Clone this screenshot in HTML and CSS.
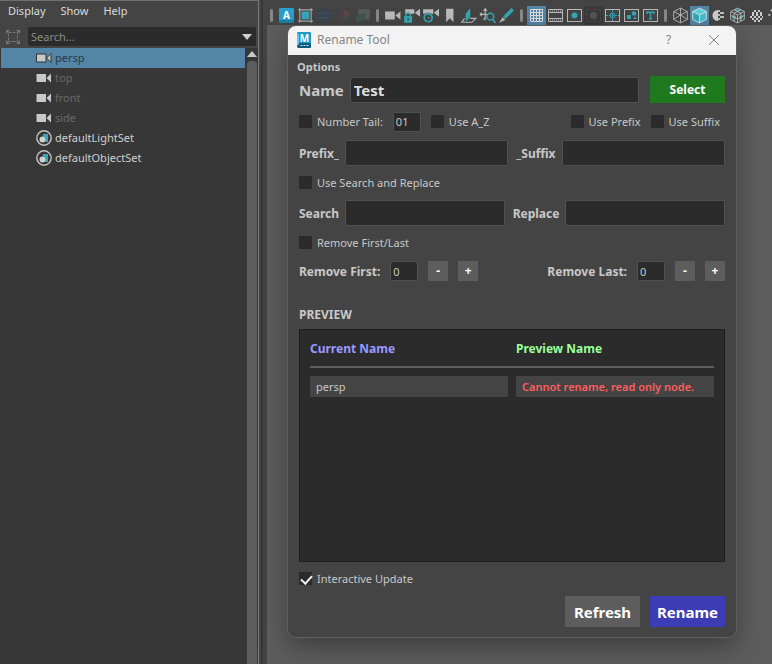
FILE: index.html
```
<!DOCTYPE html>
<html lang="en">
<head>
  <meta charset="UTF-8">
  <meta name="viewport" content="width=device-width, initial-scale=1.0">
  <title>Rename Tool</title>
  <link rel="stylesheet" href="styles.css">
</head>
<body>

<!-- shared icons -->
<svg class="defs" width="0" height="0">
  <symbol id="camera" viewBox="0 0 15 12">
    <path d="M0 2h9.500v8H0zM10 6l4.500-4.500v9z"/>
  </symbol>
  <symbol id="set" viewBox="0 0 16 16">
    <circle cx="8" cy="8" r="7.200" fill="none" stroke="#c4c4c4" stroke-width="1.400"/>
    <path fill="#35a7b5" d="M7 4h5v8H9V7H7z"/>
    <circle cx="6.500" cy="9.500" r="3" fill="#d0d0d0"/>
  </symbol>
</svg>

<aside class="outliner">
  <nav class="menu">
    <a href="#">Display</a>
    <a href="#">Show</a>
    <a href="#">Help</a>
  </nav>
  <div class="search-row">
    <svg class="frame-icon" viewBox="0 0 16 16">
      <path fill="none" stroke="#777" d="M3.500 3.500h9v9h-9z" stroke-dasharray="3 1"/>
      <path fill="#777" d="M1 1h4L1 5zM15 1v4l-4-4zM15 15h-4l4-4zM1 15v-4l4 4z"/>
    </svg>
    <div class="search-box">
      <input type="text" placeholder="Search..." aria-label="Search">
      <button type="button" class="search-arrow" aria-label="Search options"></button>
    </div>
  </div>
  <div class="list">
    <ul class="nodes">
      <li class="node selected"><svg class="node-icon cam"><use href="#camera"/></svg>persp</li>
      <li class="node dim"><svg class="node-icon cam"><use href="#camera"/></svg>top</li>
      <li class="node dim"><svg class="node-icon cam"><use href="#camera"/></svg>front</li>
      <li class="node dim"><svg class="node-icon cam"><use href="#camera"/></svg>side</li>
      <li class="node"><svg class="node-icon"><use href="#set"/></svg>defaultLightSet</li>
      <li class="node"><svg class="node-icon"><use href="#set"/></svg>defaultObjectSet</li>
    </ul>
    <div class="scrollbar">
      <span class="scroll-up"></span>
      <span class="scroll-thumb"></span>
    </div>
  </div>
</aside>

<main class="panel">
  <div class="toolbar">
    <span class="sep"></span>
    <button type="button" aria-label="Arnold"><svg viewBox="-1 -1 17 17"><rect width="15" height="15" rx="1" fill="#2a9fcb"/><path fill="#1c7fa8" d="M0 12h15v3H0z"/><text x="7.500" y="11" text-anchor="middle" class="badge-letter">A</text></svg></button>
    <button type="button" aria-label="Isolate"><svg viewBox="0 0 15 15"><path fill="#35a7b5" d="M4 4h7v7H4z"/><path fill="none" stroke="#aaa" d="M2.500 1v13M12.500 1v13M1 2.500h13M1 12.500h13"/></svg></button>
    <button type="button" aria-label="Layers"><svg viewBox="0 0 15 15"><path fill="#3b4552" d="M1 2h13v11H1z"/><path stroke="#485160" d="M1 5.500h13M1 9.500h13"/></svg></button>
    <button type="button" aria-label="Color"><svg viewBox="0 0 15 15"><circle cx="7.500" cy="7.500" r="5.500" fill="#4d3f4d"/><path fill="#5c4545" d="M7.500 2a5.500 5.500 0 0 1 5 7.500l-5-2z"/><path fill="#405044" d="M7.500 7.500l5 2a5.500 5.500 0 0 1-8 2z"/></svg></button>
    <button type="button" aria-label="Compare"><svg viewBox="0 0 15 15"><path fill="#5a5a5a" d="M4 2h10v9H4z"/><path fill="#3f554d" d="M1 13q0-7 9-8v6q-5 0-6 3z"/></svg></button>
    <span class="sep"></span>
    <button type="button" aria-label="Camera"><svg viewBox="0 0 15 15"><path fill="#bbb" d="M1 4h8.500v7H1zM10 7.500L14.500 4v7z"/></svg></button>
    <button type="button" aria-label="Lock camera"><svg viewBox="0 0 15 15"><path fill="#bbb" d="M2 2h8v4H2zM10.500 5L15 1.500v7z"/><path fill="#35a7b5" d="M1 8h7v6H1z"/><path fill="none" stroke="#35a7b5" stroke-width="1.300" d="M2.500 8V6.500q2-3 4 0V8"/><path fill="#333" d="M4 10h1v2H4z"/></svg></button>
    <button type="button" aria-label="Camera attributes"><svg viewBox="0 0 15 15"><path fill="#bbb" d="M1 2h9v4H1zM10.500 5L15 1.500v7z"/><circle cx="5.500" cy="9.500" r="4.500" fill="#444"/><circle cx="5.500" cy="9.500" r="3.500" fill="none" stroke="#35a7b5" stroke-width="1.500"/><path fill="#35a7b5" d="M5 9h2v1H5z"/></svg></button>
    <button type="button" aria-label="Bookmark"><svg viewBox="0 0 15 15"><path fill="#bbb" d="M4.500 1.500h6.500v12L7.750 10 4.500 13.500z"/></svg></button>
    <button type="button" aria-label="Image plane"><svg viewBox="0 0 15 15"><path fill="none" stroke="#bbb" d="M4 10L1.500 13.500h9L14 10H9"/><path fill="#35a7b5" d="M5 6l4-5v8l-4 4z"/></svg></button>
    <button type="button" aria-label="Pan zoom"><svg viewBox="0 0 15 15"><path fill="none" stroke="#bbb" d="M5.500 2v9M1 6.500h8M4 3.500l1.500-2 1.500 2M2.500 5L1 6.500 2.500 8M4 10l1.500 1.500"/><circle cx="10" cy="8.500" r="3" fill="#444" stroke="#35a7b5" stroke-width="1.400"/><path stroke="#35a7b5" stroke-width="1.500" d="M12 11l2.500 3"/></svg></button>
    <button type="button" aria-label="Grease pencil"><svg viewBox="0 0 15 15"><path stroke="#35a7b5" stroke-width="3" d="M5.500 9.500L13 2"/><path fill="#bbb" d="M4 9l2.500 2.500L1 14z"/></svg></button>
    <span class="sep"></span>
    <button type="button" class="active" aria-label="Grid"><svg viewBox="0 0 17 17"><path fill="none" stroke="#ddd" d="M2.500 2.500h12v12h-12zM5.500 2v13M8.500 2v13M11.500 2v13M2 5.500h13M2 8.500h13M2 11.500h13"/></svg></button>
    <button type="button" aria-label="Film gate"><svg viewBox="0 0 17 17"><path fill="none" stroke="#bbb" d="M1.500 2.500h14v12h-14zM2 5.500h13M2 11.500h13"/><path stroke="#bbb" stroke-dasharray="1 1" d="M3 4h12M3 13h12"/></svg></button>
    <button type="button" aria-label="Resolution gate"><svg viewBox="0 0 17 17"><rect x="1.500" y="2.500" width="14" height="12" fill="none" stroke="#bbb"/><circle cx="8.500" cy="8.500" r="3" fill="#35a7b5"/></svg></button>
    <button type="button" class="pressed" aria-label="Gate mask"><svg viewBox="0 0 17 17"><rect x="1.500" y="2.500" width="14" height="12" fill="none" stroke="#444"/><circle cx="8.500" cy="8.500" r="3.500" fill="#555"/></svg></button>
    <button type="button" aria-label="Field chart"><svg viewBox="0 0 17 17"><rect x="1.500" y="2.500" width="14" height="12" fill="none" stroke="#bbb"/><path fill="none" stroke="#35a7b5" stroke-dasharray="2 1" d="M8.500 3v11M2 8.500h13"/><circle cx="8.500" cy="8.500" r="2.500" fill="none" stroke="#35a7b5"/></svg></button>
    <button type="button" aria-label="Safe action"><svg viewBox="0 0 17 17"><rect x="1.500" y="2.500" width="14" height="12" fill="none" stroke="#bbb"/><circle cx="11" cy="6.500" r="2.300" fill="#35a7b5"/><path fill="#35a7b5" d="M4 8h4v4H4zM10 12l2-2.500 2 2.500z"/></svg></button>
    <button type="button" aria-label="Safe title"><svg viewBox="0 0 17 17"><rect x="1.500" y="2.500" width="14" height="12" fill="none" stroke="#bbb"/><path fill="none" stroke="#35a7b5" stroke-width="1.500" d="M5 7V5.300h7V7M8.500 5v7M7 12h3"/></svg></button>
    <span class="sep"></span>
    <button type="button" aria-label="Wireframe"><svg viewBox="0 0 15 15"><path fill="none" stroke="#bbb" stroke-width=".8" d="M7.500 1l6 3v7l-6 3-6-3V4zM1.500 4l6 3 6-3M7.500 7v7M7.500 1v6M1.500 11l6-4 6 4"/></svg></button>
    <button type="button" class="active" aria-label="Shaded"><svg viewBox="0 0 15 15"><path fill="#5cd0dd" d="M7.500 1l6 3-6 3-6-3z"/><path fill="#35a7b5" d="M1.500 4l6 3v7l-6-3z"/><path fill="#48bccb" d="M13.500 4l-6 3v7l6-3z"/><path fill="none" stroke="#eee" stroke-width=".7" d="M7.500 1l6 3v7l-6 3-6-3V4zM1.500 4l6 3 6-3M7.500 7v7"/></svg></button>
    <button type="button" aria-label="Default material"><svg viewBox="0 0 17 17"><path fill="#ccc" d="M8 3v11a5.500 5.500 0 0 1 0-11z"/><path fill="none" stroke="#bbb" stroke-width="2" stroke-dasharray="2 2" d="M9 3v12M13 5v7"/><path fill="none" stroke="#bbb" stroke-width="2" stroke-dasharray="2 2" d="M11 5v8"/></svg></button>
    <button type="button" aria-label="Textured"><svg viewBox="0 0 15 15"><path fill="#35a7b5" d="M5 2l5 0-2.500 3zM3 7l3 1v3l-3-1zM9 8l3-1v3l-3 2z"/><path fill="none" stroke="#bbb" stroke-width=".8" d="M7.500 1l6 3v7l-6 3-6-3V4zM1.500 4l6 3 6-3M7.500 7v7M4.500 2.500l6 3v7M10.500 2.500l-6 3v7M1.500 7.500l6 3 6-3"/></svg></button>
    <button type="button" aria-label="Checker"><svg viewBox="0 0 17 17"><path fill="none" stroke="#ccc" stroke-width="2" stroke-dasharray="2 2" d="M6 4h6M4 8h10M4 12h10"/><path fill="none" stroke="#ccc" stroke-width="2" stroke-dasharray="2 2" d="M4 6h10M2 10h13M6 14h6"/></svg></button>
    <button type="button" aria-label="Lights"><svg viewBox="0 0 15 15"><circle cx="4" cy="3" r="1" fill="#bbb"/><circle cx="2" cy="7" r="1" fill="#bbb"/></svg></button>
  </div>

  <div class="viewport">
    <section class="dialog">
      <header class="titlebar">
        <svg class="app-icon" viewBox="0 0 16 16"><path fill="#1d9cc7" d="M1 1q0-1 1-1h12q1 0 1 1v10H1z"/><path fill="#0f5a7d" d="M1 11h14v4q0 1-1 1H2l-1-1z"/><path fill="#67c7e4" d="M1 1l2 2v9l-2 2z"/><text x="8.500" y="10" text-anchor="middle" class="badge-letter">M</text><path stroke="#cde6ef" stroke-dasharray="2 1" d="M4.500 13.500h8"/></svg>
        <h1>Rename Tool</h1>
        <button type="button" class="title-button" aria-label="Help">?</button>
        <button type="button" class="title-button" aria-label="Close"><svg viewBox="0 0 12 12"><path stroke="#888" d="M1 1l10 10M11 1L1 11"/></svg></button>
      </header>

      <form class="content">
        <h2 class="options">Options</h2>
        <div class="row name-row">
          <label for="name">Name</label>
          <input type="text" id="name" class="field" value="Test">
          <button type="button" class="select-button">Select</button>
        </div>
        <div class="row checks">
          <label class="check"><input type="checkbox">Number Tail:</label>
          <input type="text" class="field small" value="01" aria-label="Number tail start">
          <label class="check"><input type="checkbox">Use A_Z</label>
          <label class="check push"><input type="checkbox">Use Prefix</label>
          <label class="check suffix"><input type="checkbox">Use Suffix</label>
        </div>
        <div class="row">
          <label for="prefix">Prefix_</label>
          <input type="text" id="prefix" class="field">
          <label for="suffix" class="second">_Suffix</label>
          <input type="text" id="suffix" class="field">
        </div>
        <label class="check"><input type="checkbox">Use Search and Replace</label>
        <div class="row">
          <label for="search">Search</label>
          <input type="text" id="search" class="field">
          <label for="replace" class="second">Replace</label>
          <input type="text" id="replace" class="field">
        </div>
        <label class="check"><input type="checkbox">Remove First/Last</label>
        <div class="row remove-row">
          <div class="stepper">
            <label for="first">Remove First:</label>
            <input type="text" id="first" class="field small" value="0">
            <button type="button">-</button>
            <button type="button">+</button>
          </div>
          <div class="stepper">
            <label for="last">Remove Last:</label>
            <input type="text" id="last" class="field small" value="0">
            <button type="button">-</button>
            <button type="button">+</button>
          </div>
        </div>

        <h2 class="preview-title">PREVIEW</h2>
        <div class="preview">
          <table>
            <thead>
              <tr><th class="current">Current Name</th><th class="new">Preview Name</th></tr>
            </thead>
            <tbody>
              <tr>
                <td><div class="cell">persp</div></td>
                <td><div class="cell error">Cannot rename, read only node.</div></td>
              </tr>
            </tbody>
          </table>
        </div>
        <label class="check"><input type="checkbox" checked>Interactive Update</label>
        <div class="actions">
          <button type="button" class="refresh">Refresh</button>
          <button type="submit" class="rename">Rename</button>
        </div>
      </form>
    </section>
  </div>
</main>

</body>
</html>
```
FILE: styles.css
```
* {
  box-sizing: border-box;
}

body {
  margin: 0;
  display: flex;
  min-height: 100vh;
  background-color: #444;
  color: #c8c8c8;
  font-family: "Noto Sans", "Open Sans", sans-serif;
  font-size: 11px;
  overflow: hidden;
}

button,
input {
  font-family: inherit;
  font-size: inherit;
  color: inherit;
  margin: 0;
  padding: 0;
  border: none;
}

h1,
h2 {
  margin: 0;
}

.defs {
  position: absolute;
}

/* outliner */
.outliner {
  flex: 0 0 259px;
  display: flex;
  flex-direction: column;
  border-top: 1px solid #6f6f6f;
  border-right: 1px solid #7a7a7a;
}

.menu {
  display: flex;
  gap: 15px;
  height: 25px;
  padding-left: 8px;
  line-height: 20px;
}

.menu a {
  color: #dcdcdc;
  text-decoration: none;
}

.search-row {
  display: flex;
  align-items: center;
  gap: 7px;
  padding: 1px 2px 2px 5px;
}

.frame-icon {
  width: 16px;
  height: 16px;
}

.search-box {
  flex: 1;
  display: flex;
  align-items: center;
  height: 19px;
  padding: 0 4px 0 3px;
  background-color: #2b2b2b;
  border-radius: 2px;
}

.search-box input {
  flex: 1;
  min-width: 0;
  background: none;
  outline: none;
}

.search-box input::placeholder {
  color: #8c8c8c;
}

.search-arrow {
  border: 5px solid transparent;
  border-top: 6px solid #d0d0d0;
  border-bottom: none;
  background: none;
}

.list {
  flex: 1;
  display: flex;
  gap: 1px;
  padding-left: 1px;
  background-color: #373737;
}

.nodes {
  flex: 1;
  margin: 0;
  padding: 0;
  list-style: none;
}

.node {
  display: flex;
  align-items: center;
  gap: 3px;
  height: 20px;
  padding: 0 0 1px 35px;
  color: #d0d0d0;
}

.node.selected {
  background-color: #5285a6;
  color: #263a4a;
}

.node.dim {
  color: #6a6a6a;
}

.node-icon {
  width: 16px;
  height: 16px;
}

.node-icon.cam {
  height: 12px;
  fill: #c8c8c8;
}

.selected .cam {
  stroke: #333;
}

.scrollbar {
  display: flex;
  flex-direction: column;
  align-items: center;
  gap: 4px;
  width: 12px;
  padding-top: 3px;
}

.scroll-up {
  border: 5px solid transparent;
  border-bottom: 6px solid #c8c8c8;
  border-top: none;
}

.scroll-thumb {
  flex: 1;
  width: 10px;
  background-color: #5d5d5d;
  border-radius: 4px 4px 0 0;
}

/* viewport panel */
.panel {
  flex: 1;
  min-width: 0;
  display: flex;
  flex-direction: column;
  margin-left: 2px;
  padding-left: 4px;
  border-left: 2px solid #373737;
}

.toolbar {
  display: flex;
  align-items: center;
  height: 25px;
  margin-left: -1px;
  padding-top: 5px;
  overflow: hidden;
}

.toolbar button {
  flex: 0 0 19px;
  display: flex;
  justify-content: center;
  align-items: center;
  height: 19px;
  background: none;
}

.toolbar svg {
  flex: none;
  width: 17px;
  height: 17px;
}

.toolbar .active {
  background-color: #5285a6;
}

.toolbar .pressed {
  background-color: #3a3a3a;
}

.sep {
  flex: 0 0 3px;
  height: 13px;
  margin: 0 4px;
  background-color: #888;
  border-radius: 2px;
}

.badge-letter {
  font-size: 10px;
  font-weight: bold;
  fill: #fff;
}

.viewport {
  position: relative;
  flex: 1;
  background-color: #5d5d5d;
}

/* rename window, floats over the viewport */
.dialog {
  position: absolute;
  top: 1px;
  left: 21px;
  right: 36px;
  background-color: #444;
  border-radius: 8px;
  box-shadow: 0 0 0 1px #5f5f5f, 0 10px 26px rgba(0, 0, 0, 0.35);
}

.titlebar {
  display: flex;
  align-items: center;
  height: 29px;
  padding: 0 0 2px 8px;
  background-color: #f3f3f3;
  color: #858585;
  border-radius: 8px 8px 0 0;
}

.app-icon {
  width: 16px;
  height: 16px;
  margin-right: 5px;
}

.titlebar h1 {
  flex: 1;
  font-size: 12px;
  font-weight: normal;
  line-height: 16px;
}

.title-button {
  display: flex;
  justify-content: center;
  align-items: center;
  width: 45px;
  height: 26px;
  background: none;
  font-size: 12px;
}

.title-button svg {
  width: 12px;
  height: 12px;
}

.content {
  display: flex;
  flex-direction: column;
  gap: 10px;
  padding: 3px 11px 10px;
}

.content > .check {
  margin: -1px 0 1px;
}

.options {
  margin: 0 0 -10px -2px;
  font-size: 11px;
  line-height: 18px;
}

.row {
  display: flex;
  align-items: center;
  gap: 6px;
  font-size: 12px;
  font-weight: bold;
}

.field {
  flex: 1;
  min-width: 0;
  height: 26px;
  padding: 0 4px;
  background-color: #2b2b2b;
  border: 1px solid #505050;
  border-radius: 2px;
}

.field.small {
  flex: 0 0 28px;
  width: 28px;
  height: 20px;
  padding: 0 2px;
  font-size: 11px;
  font-weight: normal;
}

.name-row {
  font-size: 15px;
}

.name-row .field {
  padding: 0 3px;
  font-weight: bold;
  color: #dedede;
}

.select-button {
  width: 75px;
  height: 27px;
  margin-left: 5px;
  background-color: #1f7a1f;
  color: #fff;
  font-size: 12px;
  font-weight: bold;
}

.second {
  margin-left: 2px;
}

.checks {
  gap: 10px;
  height: 17px;
}

.check {
  display: flex;
  align-items: center;
  gap: 5px;
  height: 14px;
  font-size: 11px;
  font-weight: normal;
}

.check input {
  appearance: none;
  width: 13px;
  height: 13px;
  background-color: #2b2b2b;
}

.check input:checked::before {
  content: "";
  display: block;
  width: 5px;
  height: 9px;
  margin: 1px 0 0 4px;
  border: solid #eee;
  border-width: 0 2px 2px 0;
  transform: rotate(42deg);
}

.push {
  margin-left: auto;
}

.suffix {
  margin-right: 5px;
}

.remove-row {
  justify-content: space-between;
  margin-top: 1px;
}

.stepper {
  display: flex;
  align-items: center;
  gap: 10px;
}

.stepper button {
  width: 20px;
  height: 20px;
  background-color: #5d5d5d;
  color: #fff;
  font-size: 12px;
  font-weight: bold;
  line-height: 20px;
}

.preview-title {
  margin: 14px 0 -6px;
  font-size: 12px;
  line-height: 20px;
}

.preview {
  min-height: 233px;
  padding: 10px;
  background-color: #2b2b2b;
  border: 1px solid #1e1e1e;
}

.preview table {
  width: 100%;
  table-layout: fixed;
  border-collapse: collapse;
}

.preview th {
  padding: 0 0 8px;
  border-bottom: 2px solid #5d5d5d;
  font-size: 12px;
  line-height: 18px;
  text-align: left;
}

.preview td {
  padding: 8px 4px 0 0;
}

.preview th + th,
.preview td + td {
  padding-left: 4px;
  padding-right: 0;
}

.current {
  color: #9999ff;
}

.new {
  color: #99ff99;
}

.cell {
  height: 21px;
  padding: 0 6px;
  background-color: #444;
  line-height: 21px;
}

.error {
  color: #ff5f5f;
  font-weight: 600;
}

.actions {
  display: flex;
  justify-content: flex-end;
  gap: 10px;
}

.actions button {
  width: 75px;
  height: 31px;
  color: #fff;
  font-size: 15px;
  font-weight: bold;
}

.refresh {
  background-color: #5d5d5d;
}

.rename {
  background-color: #3c3cb4;
}
```
